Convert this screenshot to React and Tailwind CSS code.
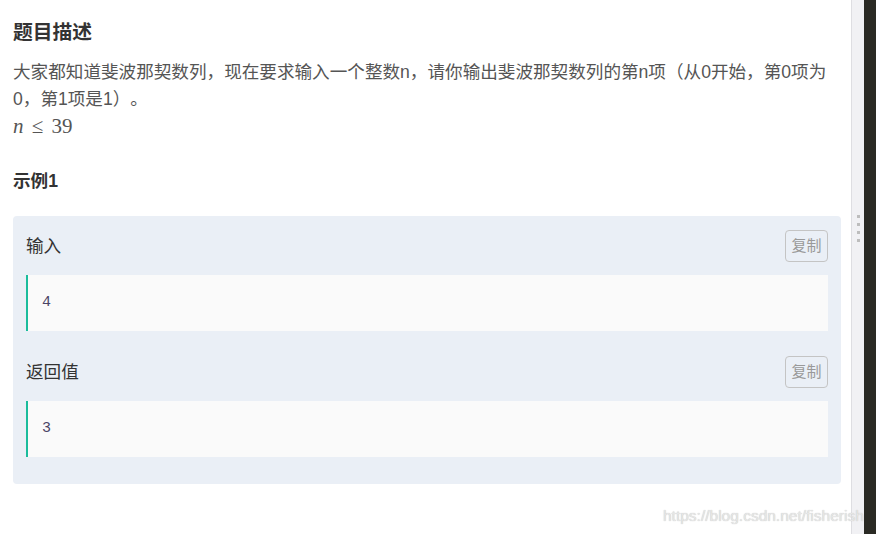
export default function App() {
  const sans = { fontFamily: '"Liberation Sans", "Noto Sans CJK SC", sans-serif' };
  const Section = ({ label, value, top }) => (
    <div className={top ? "" : "mt-[25px]"}>
      <div className="flex items-center justify-between h-[32px]">
        <span className="text-[17.6px] text-[#333]">{label}</span>
        <button className="h-[32px] w-[43px] rounded-[4px] border border-[#c4c4c4] text-[15px] text-[#999] flex items-center justify-center bg-transparent">
          复制
        </button>
      </div>
      <div className="mt-[13px] h-[56px] bg-[#fafafa] border-l-[2px] border-[#1abc9c] flex items-center pl-[14px]">
        <span className="text-[15px] text-[#4a4466]" style={{ fontFamily: '"Liberation Mono", monospace' }}>{value}</span>
      </div>
    </div>
  );
  return (
    <div className="relative w-[876px] h-[534px] flex bg-white overflow-hidden [text-spacing-trim:space-all]" style={sans}>
      <div className="w-[851px] pl-[13px] pr-[10px] pt-[18px]">
        <h2 className="text-[19.8px] font-bold text-[#333] leading-[28px]">题目描述</h2>
        <p className="mt-[13px] text-[17.6px] leading-[27px] text-[#555]">
          大家都知道斐波那契数列，现在要求输入一个整数n，请你输出斐波那契数列的第n项（从0开始，第0项为0，第1项是1）。
        </p>
        <div className="text-[21px] leading-[26px] text-[#555]" style={{ fontFamily: '"Liberation Serif", serif' }}>
          <i>n</i> <span className="mx-[3px]">≤</span> 39
        </div>
        <div className="mt-[29px] text-[17.6px] font-bold text-[#333] leading-[26px]">示例1</div>
        <div className="mt-[22px] bg-[#eaeff6] rounded-[4px] px-[13px] pt-[14px] pb-[27px]">
          <Section label="输入" value="4" top />
          <Section label="返回值" value="3" />
        </div>
      </div>
      <div className="w-[13px] bg-[#f1f1f4] border-l border-[#dedee2] flex flex-col items-center pt-[215px] gap-[5px]">
        <div className="w-[3px] h-[3px] bg-[#bdbdbd]" />
        <div className="w-[3px] h-[3px] bg-[#bdbdbd]" />
        <div className="w-[3px] h-[3px] bg-[#bdbdbd]" />
        <div className="w-[3px] h-[3px] bg-[#bdbdbd]" />
      </div>
      <div className="flex-1 bg-[#2a2a24]" />
      <div className="absolute left-[663px] top-[504px] text-[15.5px] text-[#e6e6e6] whitespace-nowrap" style={{ fontFamily: '"Liberation Sans", sans-serif', textShadow: '0 0 1px #bbb' }}>
        https://blog.csdn.net/fisherish
      </div>
    </div>
  );
}
